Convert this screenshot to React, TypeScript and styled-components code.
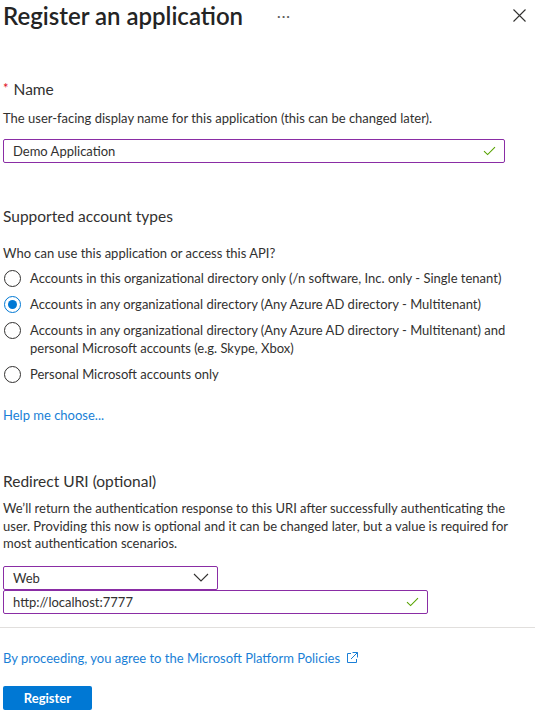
import React from "react";
import styled, { createGlobalStyle } from "styled-components";

const Global = createGlobalStyle`
  html, body { margin: 0; padding: 0; background: #ffffff; }
  body { font-family: "Lato", "Segoe UI", sans-serif; color: #323130; }
  * { box-sizing: border-box; }
`;

const Page = styled.div`
  width: 535px;
  display: flex;
  flex-direction: column;
`;

const Header = styled.header`
  display: flex;
  align-items: center;
  height: 31px;
  padding: 0 9px 0 3px;
`;

const Title = styled.h1`
  margin: 0;
  font-size: 24px;
  font-weight: 600;
  line-height: 31px;
  color: #242424;
`;

const MoreButton = styled.span`
  margin-left: 34px;
  font-size: 14px;
  letter-spacing: 1px;
  color: #605e5c;
  line-height: 31px;
`;

const CloseButton = styled.span`
  margin-left: auto;
  display: flex;
  align-items: center;
  height: 31px;
`;

const Body = styled.main`
  display: flex;
  flex-direction: column;
  padding-left: 3px;
`;

const Section = styled.section<{ $top: number }>`
  display: flex;
  flex-direction: column;
  margin-top: ${(p) => p.$top}px;
`;

const Heading = styled.h2`
  margin: 0;
  font-size: 15.5px;
  font-weight: 400;
  line-height: 20px;
  color: #323130;
`;

const Required = styled.span`
  color: #e00b1c;
  font-size: 13px;
  margin-right: 5px;
  vertical-align: 2px;
`;

const Text = styled.p<{ $top: number }>`
  margin: ${(p) => p.$top}px 0 0;
  font-size: 13px;
  line-height: 18px;
  white-space: nowrap;
`;

const Paragraph = styled.p<{ $top: number }>`
  margin: ${(p) => p.$top}px 0 0;
  font-size: 13px;
  line-height: 17.5px;
`;

const Field = styled.div<{ $width: number; $top: number }>`
  display: flex;
  align-items: center;
  width: ${(p) => p.$width}px;
  height: 24px;
  margin-top: ${(p) => p.$top}px;
  padding: 0 8px 0 9px;
  border: 1px solid #8a2da5;
  border-radius: 2px;
  font-size: 13px;
  color: #323130;
  background: #fff;
`;

const FieldValue = styled.span`
  flex: 1;
  white-space: nowrap;
`;

const RadioList = styled.div`
  display: flex;
  flex-direction: column;
  gap: 8px;
  margin-top: 7px;
`;

const RadioRow = styled.label`
  display: flex;
  align-items: flex-start;
  gap: 9px;
  font-size: 13px;
  line-height: 18px;
  padding-left: 1px;
`;

const RadioCircle = styled.span<{ $checked?: boolean }>`
  flex: none;
  width: 17px;
  height: 17px;
  margin-top: 0.5px;
  border-radius: 50%;
  border: 1px solid ${(p) => (p.$checked ? "#0078d4" : "#323130")};
  display: flex;
  align-items: center;
  justify-content: center;
  &::after {
    content: "";
    width: 9px;
    height: 9px;
    border-radius: 50%;
    background: ${(p) => (p.$checked ? "#0078d4" : "transparent")};
  }
`;

const Link = styled.a<{ $top: number }>`
  margin-top: ${(p) => p.$top}px;
  font-size: 13px;
  line-height: 18px;
  color: #1a7fd6;
  text-decoration: none;
  display: flex;
  align-items: center;
  gap: 6px;
  white-space: nowrap;
`;

const Divider = styled.hr`
  margin: 13px 0 0;
  border: 0;
  border-top: 1px solid #e1dfdd;
  width: 535px;
`;

const Footer = styled.footer`
  display: flex;
  flex-direction: column;
  align-items: flex-start;
  padding-left: 3px;
`;

const PrimaryButton = styled.button`
  margin-top: 19px;
  width: 89px;
  height: 24px;
  border: 0;
  border-radius: 2px;
  background: #0078d4;
  color: #fff;
  font-family: "Lato", sans-serif;
  font-size: 13px;
  font-weight: 700;
  padding: 0;
`;

const Check = () => (
  <svg width="13" height="10" viewBox="0 0 13 10" fill="none">
    <path d="M1 5.2 L4.6 8.6 L12 1.2" stroke="#57a300" strokeWidth="1.1" />
  </svg>
);

const Chevron = () => (
  <svg width="16" height="9" viewBox="0 0 16 9" fill="none">
    <path d="M1 1 L8 8 L15 1" stroke="#323130" strokeWidth="1.1" />
  </svg>
);

const CloseIcon = () => (
  <svg width="13" height="13" viewBox="0 0 13 13" fill="none">
    <path d="M0.5 0.5 L12.5 12.5 M12.5 0.5 L0.5 12.5" stroke="#323130" strokeWidth="1.1" />
  </svg>
);

const ExternalIcon = () => (
  <svg width="12" height="12" viewBox="0 0 12 12" fill="none">
    <path d="M5 1.5 H1.5 V10.5 H10.5 V7" stroke="#1a7fd6" strokeWidth="1" />
    <path d="M6.5 0.5 H11.5 V5.5 M11.5 0.5 L5 7" stroke="#1a7fd6" strokeWidth="1" />
  </svg>
);

const accountTypes = [
  { label: "Accounts in this organizational directory only (/n software, Inc. only - Single tenant)" },
  { label: "Accounts in any organizational directory (Any Azure AD directory - Multitenant)", checked: true },
  {
    label: (
      <>
        Accounts in any organizational directory (Any Azure AD directory - Multitenant) and
        <br />
        personal Microsoft accounts (e.g. Skype, Xbox)
      </>
    ),
  },
  { label: "Personal Microsoft accounts only" },
];

export default function App() {
  return (
    <Page>
      <Global />
      <Header>
        <Title>Register an application</Title>
        <MoreButton>···</MoreButton>
        <CloseButton>
          <CloseIcon />
        </CloseButton>
      </Header>
      <Body>
        <Section $top={47}>
          <Heading>
            <Required>*</Required>Name
          </Heading>
          <Text $top={10}>The user-facing display name for this application (this can be changed later).</Text>
          <Field $width={502} $top={12}>
            <FieldValue>Demo Application</FieldValue>
            <Check />
          </Field>
        </Section>

        <Section $top={43}>
          <Heading>Supported account types</Heading>
          <Text $top={18}>Who can use this application or access this API?</Text>
          <RadioList>
            {accountTypes.map((a, i) => (
              <RadioRow key={i}>
                <RadioCircle $checked={a.checked} />
                <span>{a.label}</span>
              </RadioRow>
            ))}
          </RadioList>
          <Link $top={23}>Help me choose...</Link>
        </Section>

        <Section $top={47}>
          <Heading>Redirect URI (optional)</Heading>
          <Paragraph $top={9}>
            We’ll return the authentication response to this URI after successfully authenticating the
            <br />
            user. Providing this now is optional and it can be changed later, but a value is required for
            <br />
            most authentication scenarios.
          </Paragraph>
          <Field $width={215} $top={13}>
            <FieldValue>Web</FieldValue>
            <Chevron />
          </Field>
          <Field $width={425} $top={0}>
            <FieldValue>http://localhost:7777</FieldValue>
            <Check />
          </Field>
        </Section>
      </Body>
      <Divider />
      <Footer>
        <Link $top={21}>
          By proceeding, you agree to the Microsoft Platform Policies
          <ExternalIcon />
        </Link>
        <PrimaryButton>Register</PrimaryButton>
      </Footer>
    </Page>
  );
}
